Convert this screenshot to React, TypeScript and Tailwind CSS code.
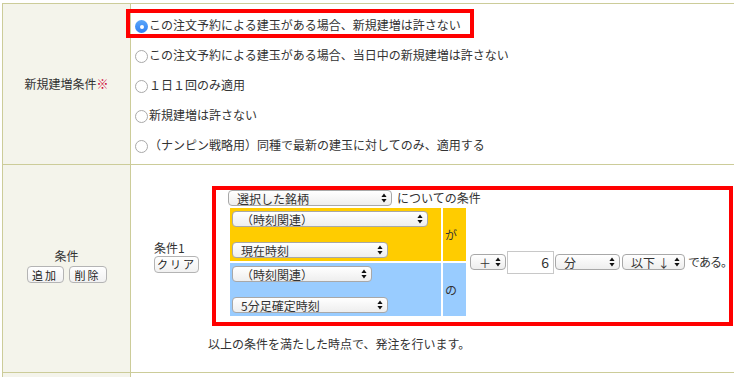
import React from 'react';

// 注文条件フォーム（新規建増条件・条件）

const LINE = 'border-[#cccc99]';

function Arrows() {
  return (
    <svg width="6" height="10" viewBox="0 0 6 10" className="shrink-0">
      <path d="M3 0.5L5.6 4H0.4Z M3 9.5L0.4 6H5.6Z" fill="#111" />
    </svg>
  );
}

function Sel({ label, className = '' }: { label: string; className?: string }) {
  return (
    <div
      className={`flex h-[16px] shrink-0 items-center justify-between rounded-[4px] border border-[#a8a8a8] bg-gradient-to-b from-white to-[#eeeeee] pl-[8px] pr-[4px] ${className}`}
    >
      <span className="translate-y-[1px] whitespace-nowrap leading-[14px]">{label}</span>
      <Arrows />
    </div>
  );
}

function Btn({ label, className = '' }: { label: string; className?: string }) {
  return (
    <div
      className={`flex h-[17px] items-center justify-center rounded-[4px] border border-[#b4b4b4] bg-gradient-to-b from-white to-[#f1f1f1] text-[11px] leading-[14px] tracking-[2px] text-[#222] ${className}`}
    >
      {label}
    </div>
  );
}

function Radio({ checked = false, label }: { checked?: boolean; label: string }) {
  return (
    <div className="flex h-[30px] items-center">
      {checked ? (
        <span className="mt-[3px] flex h-[13px] w-[13px] shrink-0 items-center justify-center rounded-full bg-gradient-to-b from-[#5aa6fa] to-[#2f7ff2]">
          <span className="h-[4px] w-[4px] rounded-full bg-white" />
        </span>
      ) : (
        <span className="mt-[3px] h-[13px] w-[13px] shrink-0 rounded-full border border-[#a9a9a9] bg-white" />
      )}
      <span className="ml-[1px] whitespace-nowrap">{label}</span>
    </div>
  );
}

export default function App() {
  return (
    <div className="relative h-[377px] w-[734px] overflow-hidden bg-white font-['Noto_Sans_CJK_JP','Noto_Sans_CJK_SC',sans-serif] text-[12px] leading-[16px] text-[#333]">
      <div className={`ml-[2px] mt-[3px] border-t ${LINE}`}>
        {/* 新規建増条件 */}
        <div className={`flex h-[161px] border-b ${LINE}`}>
          <div className={`flex w-[129px] shrink-0 items-center justify-center border-x ${LINE} bg-[#f4f4eb]`}>
            新規建増条件<span className="text-[#cc0033]">※</span>
          </div>
          <div className="flex-1 pl-[4px] pt-[6px]">
            <Radio checked label="この注文予約による建玉がある場合、新規建増は許さない" />
            <Radio label="この注文予約による建玉がある場合、当日中の新規建増は許さない" />
            <Radio label="１日１回のみ適用" />
            <Radio label="新規建増は許さない" />
            <Radio label="（ナンピン戦略用）同種で最新の建玉に対してのみ、適用する" />
          </div>
        </div>

        {/* 条件 */}
        <div className={`flex h-[208px] border-b ${LINE}`}>
          <div className={`flex w-[129px] shrink-0 flex-col items-center justify-center border-x ${LINE} bg-[#f4f4eb]`}>
            <div className="mt-[-6px]">条件</div>
            <div className="mt-[2px] flex gap-[5px]">
              <Btn label="追加" className="w-[37px]" />
              <Btn label="削除" className="w-[38px]" />
            </div>
          </div>
          <div className="flex-1 pl-[23px] pt-[21px]">
            <div className="flex items-center">
              <div className="w-[58px]">
                <div>条件1</div>
                <Btn label="クリア" className="w-[45px]" />
              </div>
              <div className="h-[140px] w-[521px] shrink-0 border-4 border-[#ff0000] pl-[12px]">
                <div className="flex h-[18px] items-start">
                  <Sel label="選択した銘柄" className="w-[164px]" />
                  <span className="ml-[5px] whitespace-nowrap leading-[16px]">についての条件</span>
                </div>
                <div className="ml-[2px] grid grid-cols-[211px_23px_1fr] grid-rows-[53px_53px] gap-[2px]">
                  <div className="flex flex-col justify-between bg-[#ffcc00] px-[2px] py-[3px]">
                    <Sel label="（時刻関連）" className="w-[196px]" />
                    <Sel label="現在時刻" className="w-[156px]" />
                  </div>
                  <div className="flex items-center bg-[#ffcc00] pl-[2px]">が</div>
                  <div className="row-span-2 flex items-center pl-[2px]">
                    <Sel label="＋" className="w-[36px] pl-[6px]" />
                    <div className="ml-[1px] flex h-[23px] w-[47px] shrink-0 items-center justify-end border border-[#c8c8c8] pr-[4px] text-[14px]">
                      6
                    </div>
                    <Sel label="分" className="ml-[1px] w-[65px]" />
                    <Sel label="以下 ↓" className="ml-[2px] w-[63px]" />
                    <span className="ml-[3px] whitespace-nowrap tracking-[-1px]">である。</span>
                  </div>
                  <div className="flex flex-col justify-between bg-[#99ccff] px-[2px] py-[3px]">
                    <Sel label="（時刻関連）" className="w-[140px]" />
                    <Sel label="5分足確定時刻" className="w-[156px]" />
                  </div>
                  <div className="flex items-center bg-[#99ccff] pl-[2px]">の</div>
                </div>
              </div>
            </div>
            <div className="ml-[54px] mt-[10px]">以上の条件を満たした時点で、発注を行います。</div>
          </div>
        </div>

        <div className="flex h-[20px]">
          <div className={`w-[129px] shrink-0 border-x ${LINE} bg-[#f4f4eb]`} />
          <div className="flex-1" />
        </div>
      </div>

      {/* 強調枠 */}
      <div className="pointer-events-none absolute left-[126px] top-[9px] h-[29px] w-[348px] border-4 border-[#ff0000]" />
    </div>
  );
}
